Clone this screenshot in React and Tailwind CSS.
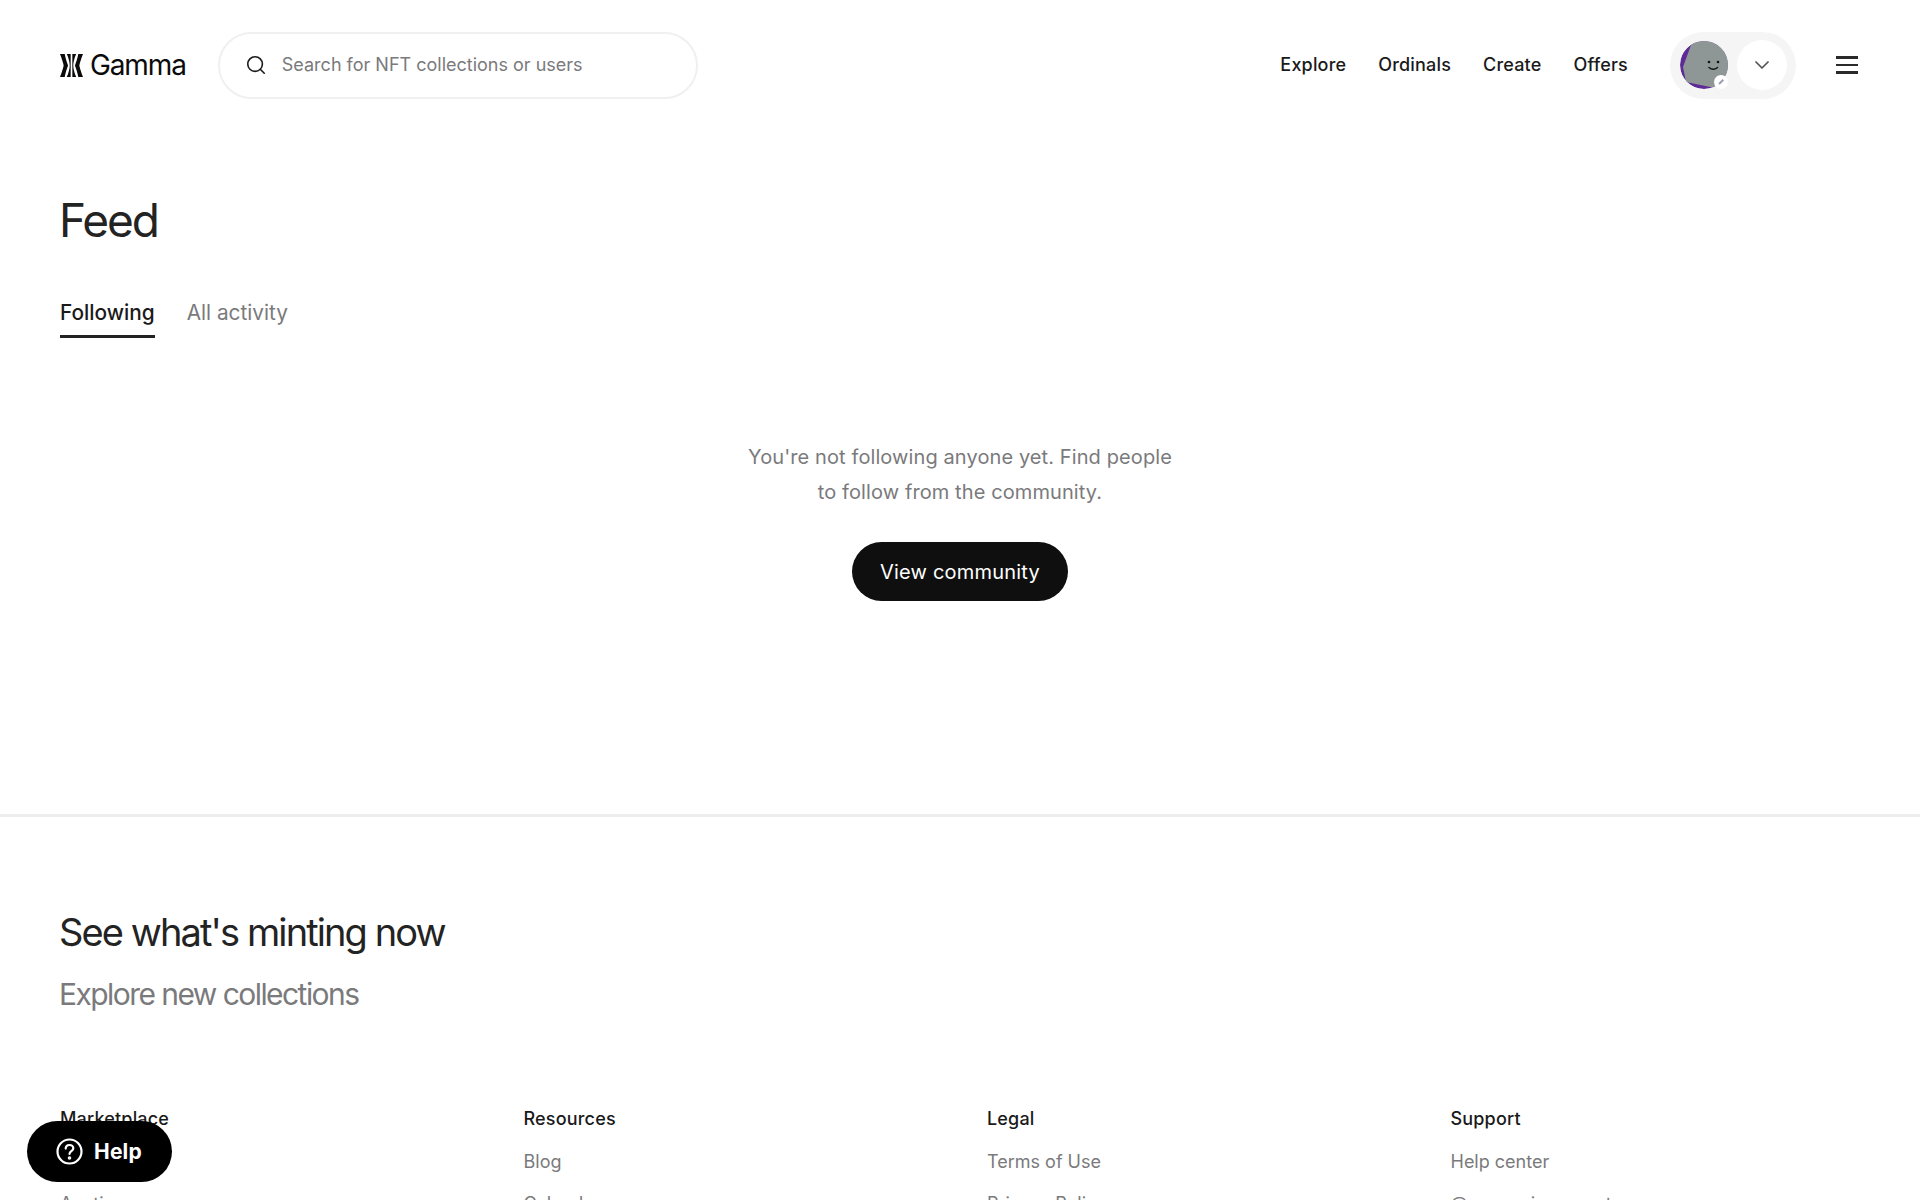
import React from 'react';
import { ChevronDown, Search } from 'lucide-react';

const navItems = ['Explore', 'Ordinals', 'Create', 'Offers'];

const footerColumns = [
  { title: 'Marketplace', links: ['Explore', 'Auctions', 'Ordinals'] },
  { title: 'Resources', links: ['Blog', 'Calendar', 'Brand'] },
  { title: 'Legal', links: ['Terms of Use', 'Privacy Policy', 'Cookies'] },
  { title: 'Support', links: ['Help center', '@gammaiosupport', 'Contact'] },
];

function Logo() {
  return (
    <div className="flex items-center gap-[7px]">
      <svg width="23" height="23" viewBox="0 0 22 22" fill="#0b0b0b">
        <path d="M0 0H4.500C5.200 4 6.700 8 7.700 11 6.700 14 5.200 18 4.500 22H0C1.500 18 3 14 3.500 11 3 8 1.500 4 0 0z" />
        <path d="M6.500 0H10.200V22H6.500C8.300 18 9.300 14 9.300 11 9.300 8 8.300 4 6.500 0z" />
        <path d="M15.500 0H11.800V22H15.500C13.700 18 12.700 14 12.700 11 12.700 8 13.700 4 15.500 0z" />
        <path d="M22 0H17.500C16.800 4 15.300 8 14.300 11 15.300 14 16.800 18 17.500 22H22C20.500 18 19 14 18.500 11 19 8 20.500 4 22 0z" />
      </svg>
      <span className="text-[28px] leading-none tracking-[-0.04em] text-[#0b0b0b]">Gamma</span>
    </div>
  );
}

function Avatar() {
  return (
    <div className="relative h-12 w-12">
      <svg width="48" height="48" viewBox="0 0 48 48" className="rounded-full">
        <circle cx="24" cy="24" r="24" fill="#5d2a96" />
        <path d="M11 0H48V48H40L6 41 3 26 11 4z" fill="#8f9796" />
        <circle cx="29" cy="21" r="1.300" fill="#111" />
        <circle cx="38" cy="21" r="1.300" fill="#111" />
        <path d="M29 26.500c2.500 2 6 2 8.500 0" fill="none" stroke="#111" strokeWidth="1.500" strokeLinecap="round" />
      </svg>
      <span className="absolute right-0 bottom-0 flex h-3.5 w-3.5 items-center justify-center rounded-full bg-white">
        <span className="h-[1.5px] w-1.5 -rotate-45 bg-gray-400" />
      </span>
    </div>
  );
}

function Header() {
  return (
    <header className="flex h-[130px] items-center justify-between px-[60px]">
      <div className="flex items-center gap-8">
        <Logo />
        <div className="flex h-[67px] w-[480px] items-center gap-[15px] rounded-full border-2 border-[#f0f0f1] pl-[25px]">
          <Search size={22} strokeWidth={1.75} className="text-[#1a1a1a]" />
          <span className="text-lg text-[#7a7a7c]">Search for NFT collections or users</span>
        </div>
      </div>
      <div className="flex items-center">
        <nav className="flex items-center gap-8 text-lg font-medium tracking-[0.01em] text-[#1a1a1a]">
          {navItems.map((item) => (
            <span key={item}>{item}</span>
          ))}
        </nav>
        <div className="ml-[42px] flex h-[67px] w-[126px] items-center gap-[9px] rounded-full bg-[#f5f5f6] pl-2.5">
          <Avatar />
          <div className="flex h-[50px] w-[50px] items-center justify-center rounded-full bg-white">
            <ChevronDown size={24} strokeWidth={1.75} className="text-[#555]" />
          </div>
        </div>
        <div className="mr-0.5 ml-10 flex w-[22px] flex-col gap-[5px]">
          <span className="h-[2.5px] bg-[#2a2a2a]" />
          <span className="h-[2.5px] bg-[#2a2a2a]" />
          <span className="h-[2.5px] bg-[#2a2a2a]" />
        </div>
      </div>
    </header>
  );
}

function FeedSection() {
  return (
    <section className="h-[687px] border-b-[3px] border-[#eeeeef] px-[60px]">
      <h1 className="-ml-px pt-[60px] text-[46px] leading-[60px] tracking-[-0.045em] text-[#232323]">Feed</h1>
      <div className="mt-[48px] flex gap-8 text-[20.800px] leading-[30px]">
        <span className="border-b-[3px] border-[#232323] pb-[7px] font-medium text-[#1a1a1a]">Following</span>
        <span className="text-[#7a7a7c]">All activity</span>
      </div>
      <div className="mt-[102px] flex flex-col items-center">
        <p className="text-center text-xl leading-[35px] tracking-[0.005em] text-[#7a7a7c]">
          You're not following anyone yet. Find people
          <br />
          to follow from the community.
        </p>
        <button type="button" className="mt-[32px] h-[59px] w-[216px] rounded-full bg-[#0f0f0f] text-xl tracking-[0.01em] text-white">
          View community
        </button>
      </div>
    </section>
  );
}

function Footer() {
  return (
    <footer className="mt-[92px] grid grid-cols-4 gap-x-[54px] px-[60px]">
      {footerColumns.map((col) => (
        <div key={col.title}>
          <h3 className="text-lg leading-[26px] font-medium tracking-[0.01em] text-[#1a1a1a]">{col.title}</h3>
          <ul className="mt-[17px] flex flex-col gap-4 text-lg leading-[26px] text-[#7a7a7c]">
            {col.links.map((link) => (
              <li key={link}>{link}</li>
            ))}
          </ul>
        </div>
      ))}
    </footer>
  );
}

export default function App() {
  return (
    <div className="relative h-screen overflow-hidden bg-white font-['Inter',sans-serif]">
      <Header />
      <FeedSection />
      <section className="px-[60px] pt-[90px]">
        <h2 className="-ml-px text-[38px] leading-[50px] tracking-[-0.05em] text-[#232323]">See what's minting now</h2>
        <p className="mt-[17px] -ml-px text-[30px] leading-[40px] tracking-[-0.052em] text-[#7a7a7c]">Explore new collections</p>
      </section>
      <Footer />
      <button
        type="button"
        className="absolute bottom-[18px] left-[27px] flex h-[61px] w-[145px] items-center gap-[11px] rounded-full bg-black pl-[29px] text-[21px] font-bold tracking-[0.01em] text-white"
      >
        <svg width="27" height="27" viewBox="0 0 27 27" fill="none" stroke="#fff" strokeWidth="2.200">
          <circle cx="13.500" cy="13.500" r="12" />
          <path d="M9.700 10.600c0-2.200 1.700-3.600 3.800-3.600s3.800 1.400 3.800 3.300c0 2.800-3.800 2.900-3.800 5.600" strokeLinecap="round" />
          <circle cx="13.500" cy="20" r="0.700" fill="#fff" />
        </svg>
        Help
      </button>
    </div>
  );
}
